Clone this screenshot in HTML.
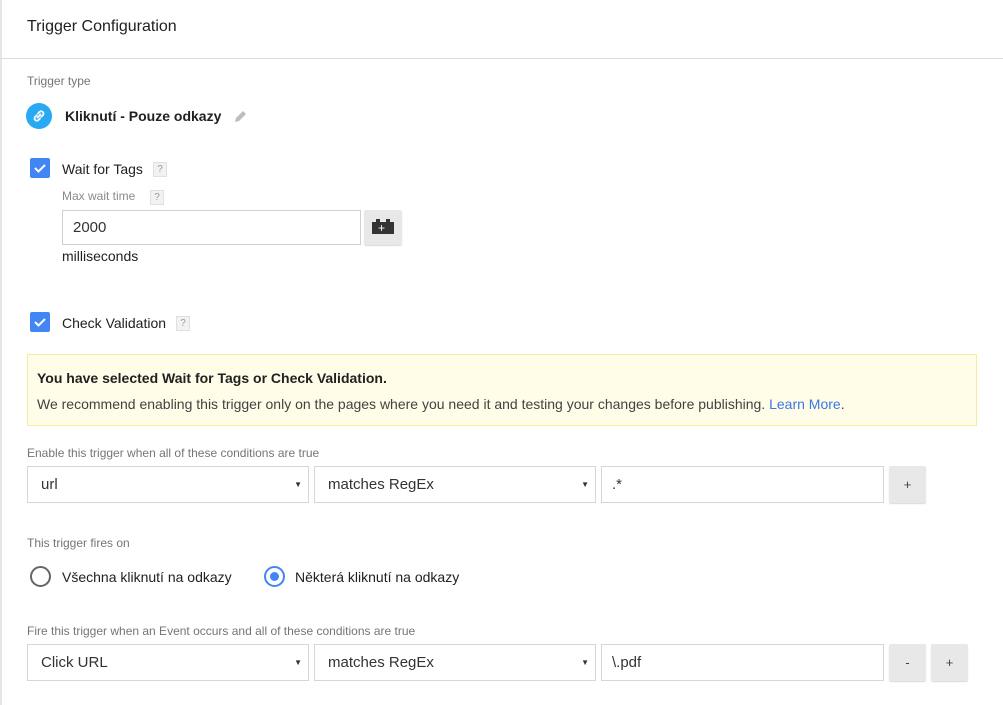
<!DOCTYPE html>
<html><head><meta charset="utf-8"><style>
*{box-sizing:border-box;margin:0;padding:0}
body{width:1003px;height:705px;background:#fff;font-family:"Liberation Sans",sans-serif;color:#212121;position:relative;overflow:hidden}
.a{position:absolute;white-space:nowrap}
.lbl{font-size:12px;color:#757575}
.t{font-size:14px;color:#212121}
.cb{position:absolute;width:20px;height:20px;background:#4285f4;border-radius:2px}
.q{position:absolute;width:14px;height:15px;background:#f2f2f2;border:1px solid #e0e0e0;font-size:10px;color:#999;text-align:center;line-height:13px}
.box{position:absolute;border:1px solid #d6d6d6;background:#fff;font-size:15px;color:#333;padding-left:13px;display:flex;align-items:center}
.sel::after{content:"▼";position:absolute;right:6px;font-size:8px;color:#333}
.btn{position:absolute;background:#e8e8e8;border-radius:2px;box-shadow:0 1px 1px rgba(0,0,0,.15);font-size:13px;text-align:center;color:#444}
</style></head><body>
<div class="a" style="left:0;top:0;width:2px;height:705px;background:#e6e6e6"></div>
<div class="a" style="left:27px;top:18px;font-size:16px;color:#212121">Trigger Configuration</div>
<div class="a" style="left:0;top:58px;width:1003px;height:1px;background:#dcdcdc"></div>
<div class="a lbl" style="left:27px;top:74px">Trigger type</div>
<div class="a" style="left:26px;top:103px;width:26px;height:26px;border-radius:50%;background:#29a9f2"></div>
<svg class="a" style="left:31px;top:108px" width="16" height="16" viewBox="0 0 16 16"><g fill="none" stroke="#fff" stroke-width="1.8" stroke-linecap="round"><path d="M7 5.5l1.5-1.5a2.3 2.3 0 0 1 3.3 3.3L10.3 8.8"/><path d="M9 10.5l-1.5 1.5a2.3 2.3 0 0 1-3.3-3.3L5.7 7.2"/><path d="M6.5 9.5l3-3"/></g></svg>
<div class="a" style="left:65px;top:108px;font-size:14px;font-weight:bold;color:#212121">Kliknutí - Pouze odkazy</div>
<svg class="a" style="left:234px;top:109px" width="14" height="14" viewBox="0 0 14 14"><path d="M1 13l1-4 7-7 3 3-7 7z" fill="#bdbdbd"/></svg>
<div class="cb" style="left:30px;top:158px"></div>
<svg class="a" style="left:30px;top:158px" width="20" height="20"><path d="M5 10l3.5 3.5L15 7" fill="none" stroke="#fff" stroke-width="2"/></svg>
<div class="a t" style="left:62px;top:161px">Wait for Tags</div>
<div class="q" style="left:153px;top:162px">?</div>
<div class="a lbl" style="left:62px;top:189px;color:#8a8a8a">Max wait time</div>
<div class="q" style="left:150px;top:190px">?</div>
<div class="box" style="left:62px;top:210px;width:299px;height:35px;border-color:#cfcfcf;padding-left:10px">2000</div>
<div class="btn" style="left:364px;top:210px;width:38px;height:35px"></div>
<div class="a" style="left:372px;top:222px;width:22px;height:12px;background:#333"></div>
<div class="a" style="left:376px;top:219px;width:4px;height:4px;background:#333"></div>
<div class="a" style="left:386px;top:219px;width:4px;height:4px;background:#333"></div>
<div class="a" style="left:378px;top:223px;color:#fff;font-size:12px;line-height:11px">+</div>
<div class="a t" style="left:62px;top:248px">milliseconds</div>
<div class="cb" style="left:30px;top:312px"></div>
<svg class="a" style="left:30px;top:312px" width="20" height="20"><path d="M5 10l3.5 3.5L15 7" fill="none" stroke="#fff" stroke-width="2"/></svg>
<div class="a t" style="left:62px;top:315px">Check Validation</div>
<div class="q" style="left:176px;top:316px">?</div>
<div class="a" style="left:27px;top:354px;width:950px;height:72px;background:#fffde8;border:1px solid #f6ec9e"></div>
<div class="a" style="left:37px;top:370px;font-size:14px;font-weight:bold;color:#212121">You have selected Wait for Tags or Check Validation.</div>
<div class="a" style="left:37px;top:396px;font-size:14px;color:#424242">We recommend enabling this trigger only on the pages where you need it and testing your changes before publishing. <span style="color:#3b78e7">Learn More</span>.</div>
<div class="a lbl" style="left:27px;top:446px">Enable this trigger when all of these conditions are true</div>
<div class="box sel" style="left:27px;top:466px;width:282px;height:37px">url</div>
<div class="box sel" style="left:314px;top:466px;width:282px;height:37px">matches RegEx</div>
<div class="box" style="left:601px;top:466px;width:283px;height:37px;padding-left:10px">.*</div>
<div class="btn" style="left:889px;top:466px;width:37px;height:37px;line-height:37px">+</div>
<div class="a lbl" style="left:27px;top:536px">This trigger fires on</div>
<div class="a" style="left:30px;top:566px;width:21px;height:21px;border:2px solid #666;border-radius:50%"></div>
<div class="a t" style="left:62px;top:569px">Všechna kliknutí na odkazy</div>
<div class="a" style="left:264px;top:566px;width:21px;height:21px;border:2px solid #4285f4;border-radius:50%"></div>
<div class="a" style="left:270px;top:572px;width:9px;height:9px;background:#4285f4;border-radius:50%"></div>
<div class="a t" style="left:295px;top:569px">Některá kliknutí na odkazy</div>
<div class="a lbl" style="left:27px;top:624px">Fire this trigger when an Event occurs and all of these conditions are true</div>
<div class="box sel" style="left:27px;top:644px;width:282px;height:37px">Click URL</div>
<div class="box sel" style="left:314px;top:644px;width:282px;height:37px">matches RegEx</div>
<div class="box" style="left:601px;top:644px;width:283px;height:37px;padding-left:10px">\.pdf</div>
<div class="btn" style="left:889px;top:644px;width:37px;height:37px;line-height:37px">-</div>
<div class="btn" style="left:931px;top:644px;width:37px;height:37px;line-height:37px">+</div>
</body></html>
